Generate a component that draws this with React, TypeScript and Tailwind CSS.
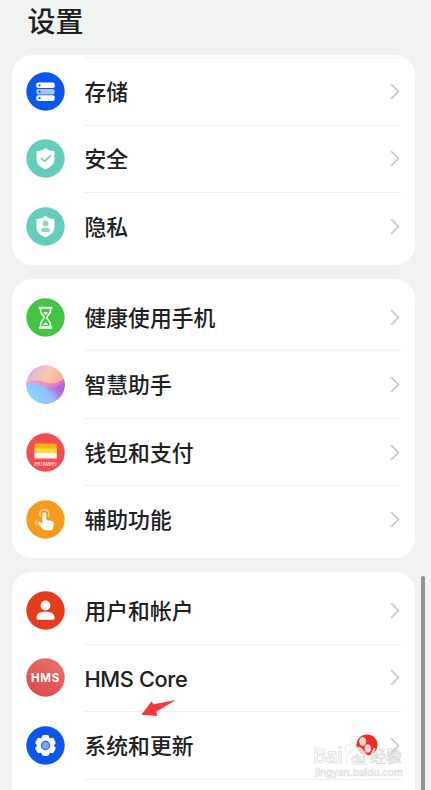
import type { ReactNode } from 'react';

function Disc({ fill, children }: { fill: string; children: ReactNode }) {
  return (
    <svg className="mb-px block h-[39px] w-[39px] shrink-0" viewBox="0 0 39 39" fill="none">
      <circle cx="19.5" cy="19.5" r="19.2" fill={fill} />
      {children}
    </svg>
  );
}

const StorageIcon = () => (
  <Disc fill="#0a56ee">
    <rect x="10.3" y="10.5" width="18.4" height="5.6" rx="1.8" fill="#fff" />
    <rect x="10.3" y="17" width="18.4" height="5.4" rx="1.8" fill="#a9c4fb" />
    <rect x="10.3" y="23.3" width="18.4" height="5.6" rx="1.8" fill="#fff" />
    <circle cx="13.6" cy="13.3" r="1.1" fill="#0a56ee" />
    <circle cx="13.6" cy="19.7" r="1.1" fill="#0a56ee" />
    <circle cx="13.6" cy="26.1" r="1.1" fill="#0a56ee" />
  </Disc>
);

const shield = 'M19.5 9C21.8 10.9 24.8 11.9 28.5 12.2V20.2C28.5 25 24.8 28.2 19.5 30.4C14.2 28.2 10.5 25 10.5 20.2V12.2C14.2 11.9 17.2 10.9 19.5 9Z';

const SafetyIcon = () => (
  <Disc fill="#65cdbb">
    <path d={shield} fill="#fff" />
    <path d="M15.3 19.4L18.6 22.5L24.1 16.9" stroke="#65cdbb" strokeWidth="1.5" strokeLinecap="round" strokeLinejoin="round" />
  </Disc>
);

const PrivacyIcon = () => (
  <Disc fill="#65cdbb">
    <path d={shield} fill="#fff" />
    <circle cx="19.5" cy="16.5" r="3" fill="#8cd9cb" />
    <path d="M15 23.8C15 21.6 16.8 20.6 19.5 20.6C22.2 20.6 24 21.6 24 23.8C22.8 25.8 16.2 25.8 15 23.8Z" fill="#8cd9cb" />
  </Disc>
);

const HourglassIcon = () => (
  <Disc fill="#43c544">
    <path d="M13.6 9.7H25.4M13.6 29.6H25.4" stroke="#fff" strokeWidth="2.1" strokeLinecap="round" />
    <path d="M14.6 10.5V13.2C14.6 16.2 18.2 17.4 18.2 19.6C18.2 21.8 14.6 23 14.6 26V29H24.4V26C24.4 23 20.8 21.8 20.8 19.6C20.8 17.4 24.4 16.2 24.4 13.2V10.5" stroke="#fff" strokeWidth="1.6" />
    <path d="M17 14.1H22L19.5 17Z" fill="#fff" />
    <path d="M17.2 27C17.4 25.4 18.6 24.7 19.5 24.2C20.4 24.7 21.6 25.4 21.8 27Z" fill="#fff" />
  </Disc>
);

const AssistantIcon = () => (
  <Disc fill="url(#sky)">
    <defs>
      <linearGradient id="sky" x1="5" y1="7" x2="30" y2="22" gradientUnits="userSpaceOnUse">
        <stop stopColor="#dcb4df" />
        <stop offset=".5" stopColor="#f9cba8" />
        <stop offset="1" stopColor="#f8ac9f" />
      </linearGradient>
      <linearGradient id="wave" x1="1" y1="20" x2="38" y2="20" gradientUnits="userSpaceOnUse">
        <stop stopColor="#eba3cb" />
        <stop offset=".5" stopColor="#f18db9" />
        <stop offset="1" stopColor="#d865c8" />
      </linearGradient>
      <linearGradient id="sea" x1="12" y1="36" x2="30" y2="21" gradientUnits="userSpaceOnUse">
        <stop stopColor="#86d5fa" />
        <stop offset=".55" stopColor="#98bbf8" />
        <stop offset="1" stopColor="#b45fe8" />
      </linearGradient>
      <clipPath id="orb"><circle cx="19.5" cy="19.5" r="19.2" /></clipPath>
    </defs>
    <g clipPath="url(#orb)">
      <path d="M0 18C8 14 13 15 20 17.5C27 20 33 18 39 13V39H0Z" fill="url(#wave)" />
      <path d="M0 20C8 17 13 19 20 21.5C27 24 33 22 39 17V39H0Z" fill="url(#sea)" />
    </g>
  </Disc>
);

const WalletIcon = () => (
  <Disc fill="#f44d51">
    <path d="M8.4 12.2C8.4 11.2 9.1 10.4 10.2 10.4H29C30.1 10.4 30.8 11.2 30.8 12.2V16H8.4Z" fill="#fcb50c" />
    <rect x="8.4" y="15.5" width="22.4" height="5" fill="#ffdc46" />
    <path d="M8.4 20H30.8V25.5H8.4Z" fill="#fff8ed" />
    <text x="19.5" y="32.6" textAnchor="middle" textLength="22" lengthAdjust="spacingAndGlyphs" fontSize="5" fontWeight="700" fontFamily="Inter, sans-serif" fill="#ffd2d2">HUAWEI</text>
  </Disc>
);

const TouchIcon = () => (
  <Disc fill="#f59b1d">
    <path d="M14.3 16.7C12.4 12.8 14.9 9.5 18.3 9.5C21.8 9.5 24.2 12.8 22.5 16.4" stroke="#ffd18e" strokeWidth="1.4" strokeLinecap="round" />
    <path d="M16.4 14.2C16.4 11.5 20.3 11.5 20.3 14.2V20L25.8 21C27.2 21.3 28 22.3 27.8 23.7L27 28C26.8 29.4 26 30.2 24.6 30.2H19.2C18.2 30.2 17.5 29.8 16.9 29.1L12.2 24.3C10.8 22.5 12.4 21.4 14.1 22.2L16.4 23.4Z" fill="#fff" />
    <path d="M11.6 20.2C8.7 20.4 8.5 24 10.4 25.5" stroke="#ffd18e" strokeWidth="1.3" strokeLinecap="round" />
  </Disc>
);

const UserIcon = () => (
  <Disc fill="#e63c1e">
    <circle cx="19.5" cy="14.5" r="4.9" fill="#fff" />
    <path d="M10.5 26.8C10.5 22.8 13.5 20.8 19.5 20.8C25.5 20.8 28.5 22.8 28.5 26.8C28.5 28 27.9 28.7 26.7 28.7H12.3C11.1 28.7 10.5 28 10.5 26.8Z" fill="#fff" />
  </Disc>
);

const HmsIcon = () => (
  <Disc fill="url(#hms)">
    <defs>
      <linearGradient id="hms" x1="28" y1="2" x2="10" y2="37" gradientUnits="userSpaceOnUse">
        <stop stopColor="#e96d69" />
        <stop offset="1" stopColor="#dc4b4a" />
      </linearGradient>
    </defs>
    <text x="19.5" y="23.8" textAnchor="middle" textLength="29" lengthAdjust="spacingAndGlyphs" fontSize="11.3" letterSpacing=".7" fontWeight="700" fontFamily="Inter, sans-serif" fill="#fff">HMS</text>
  </Disc>
);

const GearIcon = () => (
  <Disc fill="#0a56ee">
    {[0, 60, 120].map((angle) => (
      <rect key={angle} x="15.7" y="9" width="7.6" height="21" rx="2.4" fill="#fff" transform={`rotate(${angle} 19.5 19.5)`} />
    ))}
    <circle cx="19.5" cy="19.5" r="8.6" fill="#fff" />
    <circle cx="19.5" cy="19.5" r="4.7" fill="#2b69ee" />
    <circle cx="19.5" cy="19.5" r="3.4" fill="#7fa6f8" />
  </Disc>
);

const Chevron = () => (
  <svg className="block h-[17px] w-[10px] shrink-0" viewBox="0 0 10 17" fill="none">
    <path d="M1.1 1.2L8.4 8.5L1.1 15.8" stroke="#c9c9c9" strokeWidth="1.7" />
  </svg>
);

function Row({ icon, label, divider = true, badge }: { icon: ReactNode; label: string; divider?: boolean; badge?: ReactNode }) {
  return (
    <div className="flex h-[67.5px] shrink-0 items-center pl-[14px] pr-[13px]">
      {icon}
      <div className={`ml-[19.5px] flex h-full flex-1 items-center border-b pr-[2px] ${divider ? 'border-[#eeeeee]' : 'border-transparent'}`}>
        <span className="mb-px flex-1 whitespace-nowrap text-[21.8px] leading-[32px]">{label}</span>
        {badge}
        <Chevron />
      </div>
    </div>
  );
}

const UpdateBadge = () => (
  <svg className="mr-[12px] block h-[22px] w-[22px]" viewBox="0 0 22 22">
    <circle cx="11" cy="11" r="10.6" fill="#ed2d20" />
  </svg>
);

function Watermark() {
  return (
    <svg className="pointer-events-none absolute left-[308px] top-[730px] h-[56px] w-[106px]" viewBox="0 0 106 56">
      <g fill="#fff" fillOpacity=".78" stroke="#d6d6d6" strokeOpacity=".6" strokeWidth=".8">
        <ellipse cx="39.7" cy="18.5" rx="3" ry="3.8" />
        <ellipse cx="45.5" cy="11.5" rx="3.2" ry="4.2" />
        <ellipse cx="54.7" cy="11.5" rx="3.2" ry="4.2" />
        <ellipse cx="59.8" cy="18.5" rx="3" ry="4" />
        <path d="M50 17C45.5 17 44.5 21.5 41 24.5C36.5 28.5 37.5 35 43.5 34.5C48 34 52 34 56.5 34.5C62.5 35 63.5 28.5 59 24.5C55.5 21.5 54.5 17 50 17Z" />
      </g>
      <g fill="#fff" fillOpacity=".8" stroke="#d4d4d4" strokeWidth=".7" fontFamily="Inter, sans-serif" fontWeight="600">
        <text x="5.5" y="33" fontSize="20.5" textLength="29" lengthAdjust="spacingAndGlyphs">Bai</text>
        <text x="43.3" y="32.5" fontSize="12" textLength="14">du</text>
        <text x="62.5" y="31.8" fontSize="15.5" textLength="31" lengthAdjust="spacingAndGlyphs" fontFamily='"Noto Sans CJK SC", sans-serif' fontWeight="500">经验</text>
      </g>
      <text x="7" y="46.2" fontSize="9.6" textLength="88" lengthAdjust="spacingAndGlyphs" fontFamily="Inter, sans-serif" fontWeight="500" fill="#f4f4f4" stroke="#dddddd" strokeWidth=".5">jingyan.baidu.com</text>
    </svg>
  );
}

export default function App() {
  return (
    <main className="relative flex h-[790px] w-[431px] flex-col overflow-hidden bg-[#f1f3f3] font-['HarmonyOS_Sans','Noto_Sans_CJK_SC',sans-serif] font-medium text-[#202020]">
      <h1 className="h-[55px] shrink-0 pl-[27.5px] text-[28px] font-medium leading-[40px]">设置</h1>
      <div className="flex flex-col gap-[14px] pl-[12px] pr-[16px]">
        <section className="h-[210px] shrink-0 rounded-[20px] bg-white pt-[2px]">
          <div className="ml-[72px] mr-[13px] h-px bg-[#f3f3f3]" />
          <div>
            <Row icon={<StorageIcon />} label="存储" />
            <Row icon={<SafetyIcon />} label="安全" />
            <Row icon={<PrivacyIcon />} label="隐私" divider={false} />
          </div>
        </section>
        <section className="h-[279px] shrink-0 rounded-[20px] bg-white pt-[4.8px]">
          <Row icon={<HourglassIcon />} label="健康使用手机" />
          <Row icon={<AssistantIcon />} label="智慧助手" />
          <Row icon={<WalletIcon />} label="钱包和支付" />
          <Row icon={<TouchIcon />} label="辅助功能" divider={false} />
        </section>
        <section className="h-[250px] shrink-0 rounded-[20px] bg-white pt-[5px] font-['Inter','Noto_Sans_CJK_SC',sans-serif] [&_span]:mb-0 [&_span]:pt-[2px]">
          <Row icon={<UserIcon />} label="用户和帐户" />
          <div className="[&_span]:tracking-[-0.4px]">
            <Row icon={<HmsIcon />} label="HMS Core" />
          </div>
          <Row icon={<GearIcon />} label="系统和更新" badge={<UpdateBadge />} />
        </section>
      </div>
      <svg className="absolute left-[140px] top-[698px] h-[20px] w-[38px]" viewBox="0 0 38 20">
        <path d="M36 2L13.4 6.2L11.7 3.2L1.3 16.7L17 18L16.6 13.6Z" fill="#f23a3d" />
      </svg>
      <div className="absolute left-[421px] top-[576px] h-[230px] w-[4px] rounded-full bg-[#929494]" />
      <Watermark />
    </main>
  );
}
